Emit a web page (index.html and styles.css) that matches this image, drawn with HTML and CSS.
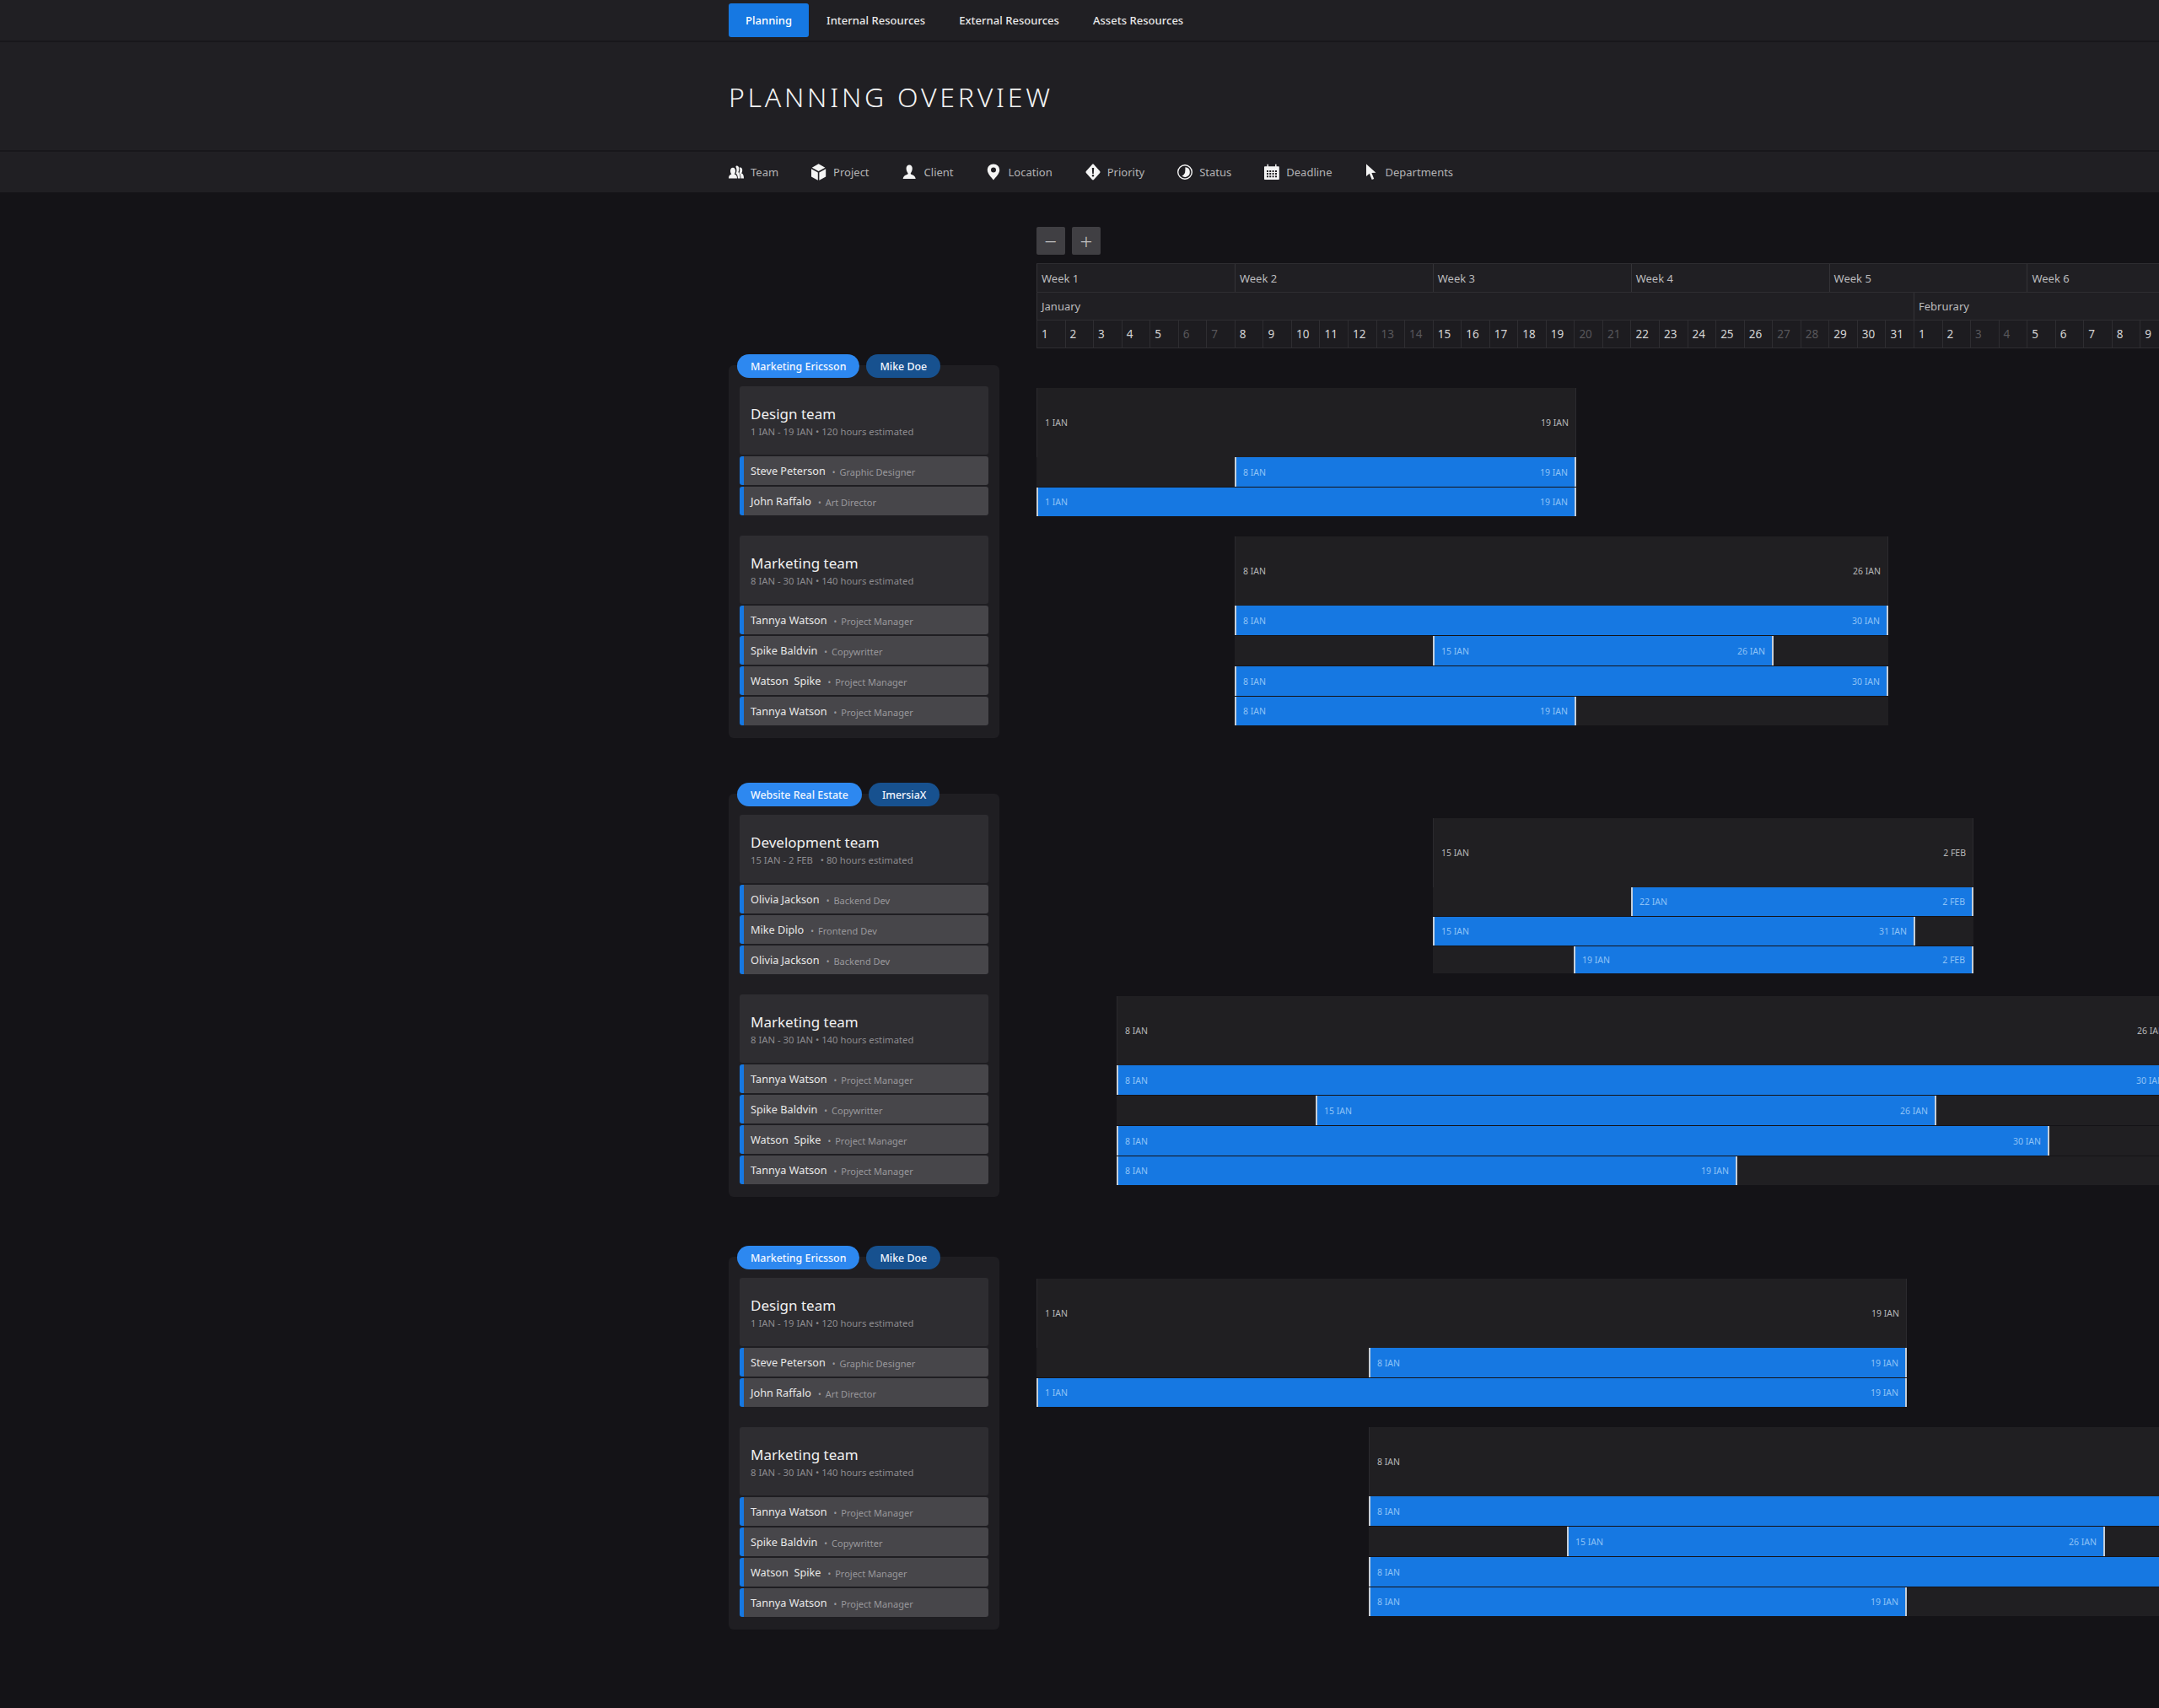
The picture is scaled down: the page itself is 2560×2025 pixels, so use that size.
FILE: index.html
```html
<!DOCTYPE html>
<html lang="en">
<head>
  <meta charset="UTF-8">
  <meta name="viewport" content="width=device-width, initial-scale=1.0">
  <title>Planning Overview</title>
  <link rel="stylesheet" href="styles.css">
</head>
<body>
  <!-- Top Navigation -->
  <nav class="topnav">
    <a class="active" href="#">Planning</a>
    <a href="#">Internal Resources</a>
    <a href="#">External Resources</a>
    <a href="#">Assets Resources</a>
  </nav>

  <header class="page-title">
    <h1>PLANNING OVERVIEW</h1>
  </header>

  <!-- Filters -->
  <div class="filters">
    <div class="filter">
      <svg class="icon" viewBox="0 0 18 20"><path d="M0 17.500c0-3.200 1.500-4.300 3.400-4.900-.9-1.100-1.400-2.500-1.400-4.100C2 6.200 3.200 4.800 5 4.800s3 1.400 3 3.700c0 1.600-.5 3-1.300 4.100 2 .6 3.300 1.700 3.300 4.900z"/><path d="M9.500 2.500c1.800 0 2.800 1.700 2.800 3.800 0 1.600-.4 2.900-1 4 1.400.6 2.400 2.200 2.400 7.200h-2.800c0-3-.8-4.900-2.400-5.800.6-1.200 1-2.500 1-3.800 0-1.600-.4-3-1.100-4.200.2-.8.600-1.200 1.100-1.200z"/><path d="M13.800 4.500c1.500 0 2.400 1.400 2.400 3.200 0 1.500-.4 2.700-1 3.700 1.600.6 2.800 1.800 2.800 6.100h-3.500c0-3-.7-5.300-2-6.500.5-1 .8-2.100.8-3.200 0-1.200-.2-2.200-.7-3 .3-.2.700-.3 1.200-.3z"/></svg>
      <span>Team</span>
    </div>
    <div class="filter">
      <svg class="icon" viewBox="0 0 18 20"><path d="M8.600.3l7.800 4.400-7.800 4.400-7.800-4.400z"/><path d="M0 6.300l7.800 4.300v9.200L0 15.400z"/><path d="M17.200 6.300l-7.800 4.300v9.200l7.800-4.400z"/></svg>
      <span>Project</span>
    </div>
    <div class="filter">
      <svg class="icon" viewBox="0 0 18 20"><path d="M8.200 1.500c2.200 0 3.600 1.800 3.600 4.200 0 2.200-.9 4.200-1.800 5.300-.4.600-.2 1.400.5 1.700 2 .8 4.700 1.500 5.200 5.300H.7c.5-3.800 3.200-4.500 5.200-5.300.7-.3.9-1.100.5-1.700C5.500 9.900 4.600 7.900 4.600 5.700c0-2.400 1.400-4.200 3.600-4.200z"/></svg>
      <span>Client</span>
    </div>
    <div class="filter">
      <svg class="icon" viewBox="0 0 18 20"><path fill-rule="evenodd" d="M8 .5C3.800.5.800 3.600.8 7.600c0 4.500 4.700 8.800 7.200 11.900 2.500-3.100 7.200-7.400 7.200-11.900C15.200 3.600 12.200.5 8 .5zm0 4a3 3 0 1 1 0 6 3 3 0 0 1 0-6z"/></svg>
      <span>Location</span>
    </div>
    <div class="filter">
      <svg class="icon" viewBox="0 0 18 20"><path fill-rule="evenodd" d="M8 1L.8 9c-.5.600-.5 1.300 0 1.900L8 19c.6.600 1.400.6 2 0l7.200-8.100c.5-.6.5-1.300 0-1.900L10 1c-.6-.6-1.400-.6-2 0zM7.800 5h2.400l-.4 7H8.200zM9 13a1.300 1.300 0 1 1 0 2.600A1.300 1.300 0 0 1 9 13z"/></svg>
      <span>Priority</span>
    </div>
    <div class="filter">
      <svg class="icon" viewBox="0 0 18 20"><path fill-rule="evenodd" d="M9 1a9 9 0 1 0 0 18A9 9 0 0 0 9 1zm0 1.400a7.600 7.600 0 1 1 0 15.200A7.600 7.600 0 0 1 9 2.400z"/><path d="M9.400 4.200a5.900 5.900 0 0 1 .5 11.700 5.900 5.900 0 0 1-4.600-1.300c1.800-.9 3.300-2.300 3.800-4.200.4-2 .3-4.200.3-6.200z"/></svg>
      <span>Status</span>
    </div>
    <div class="filter">
      <svg class="icon" viewBox="0 0 18 20"><path fill-rule="evenodd" d="M3.500.8h1.400v2.400h8.200V.8h1.400v2.400h2.300c.6 0 1 .4 1 1V18c0 .6-.4 1-1 1H1c-.6 0-1-.4-1-1V4.200c0-.6.4-1 1-1h2.500zM3 8v2h2V8zm3.200 0v2h2V8zm3.400 0v2h2V8zM13 8v2h2V8zM3 11.100v2h2v-2zm3.200 0v2h2v-2zm3.400 0v2h2v-2zm3.400 0v2h2v-2zM3 14.200v2h2v-2zm3.200 0v2h2v-2zm3.400 0v2h2v-2zm3.400 0v2h2v-2z"/></svg>
      <span>Deadline</span>
    </div>
    <div class="filter">
      <svg class="icon icon-cursor" viewBox="0 0 18 20"><path d="M2 .5V15l3.800-3.300 2.900 7.300 2.500-1-2.800-7 5-.2z"/></svg>
      <span>Departments</span>
    </div>
  </div>

  <main class="planning">
    <!-- Team Sidebar -->
    <aside class="sidebar">
      <section class="project">
        <div class="tags">
          <span class="tag">Marketing Ericsson</span>
          <span class="tag tag-dark">Mike Doe</span>
        </div>
        <div class="panel">
          <div class="team">
            <div class="team-head">
              <h2>Design team</h2>
              <p>1 IAN - 19 IAN &bull; 120 hours estimated</p>
            </div>
            <div class="member"><span class="name">Steve Peterson</span><span class="role">Graphic Designer</span></div>
            <div class="member"><span class="name">John Raffalo</span><span class="role">Art Director</span></div>
          </div>
          <div class="team">
            <div class="team-head">
              <h2>Marketing team</h2>
              <p>8 IAN - 30 IAN &bull; 140 hours estimated</p>
            </div>
            <div class="member"><span class="name">Tannya Watson</span><span class="role">Project Manager</span></div>
            <div class="member"><span class="name">Spike Baldvin</span><span class="role">Copywritter</span></div>
            <div class="member"><span class="name">Watson&nbsp; Spike</span><span class="role">Project Manager</span></div>
            <div class="member"><span class="name">Tannya Watson</span><span class="role">Project Manager</span></div>
          </div>
        </div>
      </section>

      <section class="project">
        <div class="tags">
          <span class="tag">Website Real Estate</span>
          <span class="tag tag-dark">ImersiaX</span>
        </div>
        <div class="panel">
          <div class="team">
            <div class="team-head">
              <h2>Development team</h2>
              <p>15 IAN - 2 FEB &nbsp;&nbsp;&bull; 80 hours estimated</p>
            </div>
            <div class="member"><span class="name">Olivia Jackson</span><span class="role">Backend Dev</span></div>
            <div class="member"><span class="name">Mike Diplo</span><span class="role">Frontend Dev</span></div>
            <div class="member"><span class="name">Olivia Jackson</span><span class="role">Backend Dev</span></div>
          </div>
          <div class="team">
            <div class="team-head">
              <h2>Marketing team</h2>
              <p>8 IAN - 30 IAN &bull; 140 hours estimated</p>
            </div>
            <div class="member"><span class="name">Tannya Watson</span><span class="role">Project Manager</span></div>
            <div class="member"><span class="name">Spike Baldvin</span><span class="role">Copywritter</span></div>
            <div class="member"><span class="name">Watson&nbsp; Spike</span><span class="role">Project Manager</span></div>
            <div class="member"><span class="name">Tannya Watson</span><span class="role">Project Manager</span></div>
          </div>
        </div>
      </section>

      <section class="project project-last">
        <div class="tags">
          <span class="tag">Marketing Ericsson</span>
          <span class="tag tag-dark">Mike Doe</span>
        </div>
        <div class="panel">
          <div class="team">
            <div class="team-head">
              <h2>Design team</h2>
              <p>1 IAN - 19 IAN &bull; 120 hours estimated</p>
            </div>
            <div class="member"><span class="name">Steve Peterson</span><span class="role">Graphic Designer</span></div>
            <div class="member"><span class="name">John Raffalo</span><span class="role">Art Director</span></div>
          </div>
          <div class="team">
            <div class="team-head">
              <h2>Marketing team</h2>
              <p>8 IAN - 30 IAN &bull; 140 hours estimated</p>
            </div>
            <div class="member"><span class="name">Tannya Watson</span><span class="role">Project Manager</span></div>
            <div class="member"><span class="name">Spike Baldvin</span><span class="role">Copywritter</span></div>
            <div class="member"><span class="name">Watson&nbsp; Spike</span><span class="role">Project Manager</span></div>
            <div class="member"><span class="name">Tannya Watson</span><span class="role">Project Manager</span></div>
          </div>
        </div>
      </section>
    </aside>

    <!-- Timeline -->
    <div class="timeline">
      <div class="zoom-controls">
        <button>&minus;</button>
        <button>+</button>
      </div>

      <div class="calendar">
        <div class="weeks">
          <div>Week 1</div><div>Week 2</div><div>Week 3</div><div>Week 4</div><div>Week 5</div><div>Week 6</div>
        </div>
        <div class="months">
          <div class="month-jan">January</div>
          <div class="month-feb">Februrary</div>
        </div>
        <div class="days">
          <div>1</div><div>2</div><div>3</div><div>4</div><div>5</div><div class="off">6</div><div class="off">7</div>
          <div>8</div><div>9</div><div>10</div><div>11</div><div>12</div><div class="off">13</div><div class="off">14</div>
          <div>15</div><div>16</div><div>17</div><div>18</div><div>19</div><div class="off">20</div><div class="off">21</div>
          <div>22</div><div>23</div><div>24</div><div>25</div><div>26</div><div class="off">27</div><div class="off">28</div>
          <div>29</div><div>30</div><div>31</div><div>1</div><div>2</div><div class="off">3</div><div class="off">4</div>
          <div>5</div><div>6</div><div>7</div><div>8</div><div>9</div>
        </div>
      </div>

      <div class="gantt gantt-first" style="margin-left:0;width:640px">
        <div class="gantt-head"><span>1 IAN</span><span>19 IAN</span></div>
        <div class="gantt-row"><div class="bar" style="margin-left:235px;width:405px"><span>8 IAN</span><span>19 IAN</span></div></div>
        <div class="gantt-row"><div class="bar" style="width:640px"><span>1 IAN</span><span>19 IAN</span></div></div>
      </div>
      <div class="gantt" style="margin-left:235px;width:775px">
        <div class="gantt-head"><span>8 IAN</span><span>26 IAN</span></div>
        <div class="gantt-row"><div class="bar" style="width:775px"><span>8 IAN</span><span>30 IAN</span></div></div>
        <div class="gantt-row"><div class="bar" style="margin-left:235px;width:404px"><span>15 IAN</span><span>26 IAN</span></div></div>
        <div class="gantt-row"><div class="bar" style="width:775px"><span>8 IAN</span><span>30 IAN</span></div></div>
        <div class="gantt-row"><div class="bar" style="width:405px"><span>8 IAN</span><span>19 IAN</span></div></div>
      </div>

      <div class="gantt gantt-group gantt-tight" style="margin-left:470px;width:641px">
        <div class="gantt-head"><span>15 IAN</span><span>2 FEB</span></div>
        <div class="gantt-row"><div class="bar" style="margin-left:235px;width:406px"><span>22 IAN</span><span>2 FEB</span></div></div>
        <div class="gantt-row"><div class="bar" style="width:572px"><span>15 IAN</span><span>31 IAN</span></div></div>
        <div class="gantt-row"><div class="bar" style="margin-left:167px;width:474px"><span>19 IAN</span><span>2 FEB</span></div></div>
      </div>
      <div class="gantt" style="margin-left:95px;width:1252px">
        <div class="gantt-head"><span>8 IAN</span><span>26 IAN</span></div>
        <div class="gantt-row"><div class="bar" style="width:1252px"><span>8 IAN</span><span>30 IAN</span></div></div>
        <div class="gantt-row"><div class="bar" style="margin-left:236px;width:736px"><span>15 IAN</span><span>26 IAN</span></div></div>
        <div class="gantt-row"><div class="bar" style="width:1106px"><span>8 IAN</span><span>30 IAN</span></div></div>
        <div class="gantt-row"><div class="bar" style="width:736px"><span>8 IAN</span><span>19 IAN</span></div></div>
      </div>

      <div class="gantt gantt-group gantt-group-last" style="margin-left:0;width:1032px">
        <div class="gantt-head"><span>1 IAN</span><span>19 IAN</span></div>
        <div class="gantt-row"><div class="bar" style="margin-left:394px;width:638px"><span>8 IAN</span><span>19 IAN</span></div></div>
        <div class="gantt-row"><div class="bar" style="width:1032px"><span>1 IAN</span><span>19 IAN</span></div></div>
      </div>
      <div class="gantt" style="margin-left:394px;width:1253px">
        <div class="gantt-head"><span>8 IAN</span><span>26 IAN</span></div>
        <div class="gantt-row"><div class="bar" style="width:1253px"><span>8 IAN</span><span>30 IAN</span></div></div>
        <div class="gantt-row"><div class="bar" style="margin-left:235px;width:638px"><span>15 IAN</span><span>26 IAN</span></div></div>
        <div class="gantt-row"><div class="bar" style="width:1253px"><span>8 IAN</span><span>30 IAN</span></div></div>
        <div class="gantt-row"><div class="bar" style="width:638px"><span>8 IAN</span><span>19 IAN</span></div></div>
      </div>
    </div>
  </main>
</body>
</html>
```

FILE: styles.css
```css
/* General Reset */
* {
  box-sizing: border-box;
  margin: 0;
  padding: 0;
}
html, body {
  height: 100vh;
  overflow: hidden;
}
body {
  font-family: "Noto Sans", "Open Sans", sans-serif;
  background-color: #141317;
  color: #e6e6e6;
}

/* Top Navigation */
.topnav {
  display: flex;
  align-items: center;
  height: 50px;
  padding-left: 864px;
  background-color: #201f23;
  border-bottom: 2px solid #18171b;
}
.topnav a {
  display: flex;
  align-items: center;
  height: 40px;
  padding: 0 20px;
  color: #e8e8e8;
  font-size: 13px;
  font-weight: 500;
  letter-spacing: .03px;
  text-decoration: none;
  border-radius: 3px;
}
.topnav a.active {
  width: 95px;
  margin-right: 1px;
  background-color: #1678e2;
  color: #fff;
}

/* Page Title */
.page-title {
  display: flex;
  align-items: center;
  height: 130px;
  padding-left: 864px;
  padding-top: 1px;
  background-color: #201f23;
  border-bottom: 2px solid #18171b;
}
.page-title h1 {
  font-size: 32px;
  font-weight: 300;
  letter-spacing: 3.75px;
  color: #f2f2f2;
}

/* Filters */
.filters {
  display: flex;
  align-items: center;
  gap: 39px;
  height: 48px;
  padding-left: 864px;
  background-color: #201f23;
}
.filter {
  display: flex;
  align-items: center;
  gap: 8px;
  font-size: 13px;
  color: #b4b4b6;
}
.icon {
  width: 18px;
  height: 20px;
  fill: #f4f4f4;
}
.icon-cursor {
  margin-right: -2px;
}

/* Main Layout */
.planning {
  display: flex;
  gap: 44px;
  padding: 41px 0 0 864px;
}
.sidebar {
  flex: 0 0 321px;
  margin-top: 151px;
}
.timeline {
  flex: 0 0 1400px;
}

/* Project Panels */
.project + .project {
  margin-top: 53px;
}
.project + .project-last {
  margin-top: 58px;
}
.tags {
  position: relative;
  display: flex;
  gap: 8px;
  margin: 0 0 -15px 10px;
}
.tag {
  display: flex;
  align-items: center;
  height: 28px;
  padding: 0 16px;
  border-radius: 14px;
  background-color: #2d88f0;
  color: #f2f7ff;
  font-size: 12.4px;
  font-weight: 500;
}
.tag-dark {
  background-color: #17518f;
}
.panel {
  padding: 25px 13px 15px;
  background-color: #1f1e22;
  border-radius: 6px;
}
.team + .team {
  margin-top: 24px;
}
.team-head {
  display: flex;
  flex-direction: column;
  justify-content: center;
  height: 81px;
  padding-left: 13px;
  padding-top: 1px;
  background-color: #2e2d31;
  border-radius: 3px;
}
.team-head h2 {
  font-size: 17px;
  font-weight: 400;
  line-height: 24px;
  margin-bottom: 1px;
  color: #f0f0f0;
}
.team-head p {
  font-size: 11.3px;
  line-height: 16px;
  color: #8c8b8f;
}
.member {
  display: flex;
  align-items: center;
  height: 34px;
  margin-top: 2px;
  padding-left: 8px;
  background-color: #47464a;
  border-left: 5px solid #1678e2;
  border-radius: 3px;
}
.name {
  font-size: 12.7px;
  font-weight: 400;
  color: #e8e8e8;
}
.role {
  font-size: 11px;
  color: #99989c;
  margin-left: 8px;
  padding-top: 2px;
}
.role::before {
  content: "\2022";
  margin-right: 5px;
  font-size: 10px;
}

/* Zoom Controls */
.zoom-controls {
  display: flex;
  gap: 8px;
  margin-bottom: 10px;
}
.zoom-controls button {
  display: flex;
  align-items: center;
  justify-content: center;
  width: 34px;
  height: 33px;
  border: none;
  border-radius: 2px;
  background-color: #403f43;
  color: #bdbdbf;
  font-family: "Noto Sans", sans-serif;
  font-size: 26px;
  font-weight: 300;
  line-height: 1;
}

/* Calendar Header */
.calendar {
  width: 1400px;
  font-size: 13px;
  color: #bcbcbe;
}
.weeks,
.months {
  display: flex;
  height: 34px;
  background-color: #201f23;
  border-top: 1px solid #2e2d31;
}
.months {
  height: 33px;
}
.weeks div {
  flex: 0 0 234.9px;
  display: flex;
  align-items: center;
  padding-left: 5px;
  border-left: 1px solid #343337;
}
.month-jan,
.month-feb {
  display: flex;
  align-items: center;
  padding-left: 5px;
  border-left: 1px solid #343337;
}
.month-jan {
  flex: 0 0 1040px;
}
.month-feb {
  flex: 1;
}
.days {
  display: grid;
  grid-template-columns: repeat(40, 33.55px);
  height: 34px;
  border-top: 1px solid #2e2d31;
  border-bottom: 1px solid #2e2d31;
  background-color: #1d1c20;
}
.days div {
  display: flex;
  align-items: center;
  padding-left: 5px;
  font-size: 13.5px;
  color: #d4d4d4;
  border-left: 1px solid #2e2d31;
}
.days div.off {
  color: #58575b;
}

/* Gantt Blocks */
.gantt {
  margin-top: 24px;
}
.gantt-first {
  margin-top: 47px;
}
.gantt-group {
  margin-top: 110px;
}
.gantt-group-last {
  margin-top: 111px;
}
.gantt-head {
  display: flex;
  justify-content: space-between;
  align-items: center;
  height: 82px;
  padding: 0 8px 0 9px;
  background-color: #201f22;
  border-left: 1px solid #2b2a2e;
  border-right: 1px solid #2b2a2e;
  font-size: 10.5px;
  color: #b6b6b8;
}
.gantt-row {
  height: 35px;
  margin-bottom: 1px;
  background-color: #201f22;
}
.gantt-row:last-child {
  height: 34px;
  margin-bottom: 0;
}
.gantt-tight .gantt-row {
  height: 34px;
}
.gantt-tight .gantt-row:last-child {
  height: 32px;
}
.gantt-tight + .gantt {
  margin-top: 27px;
}
.bar {
  display: flex;
  justify-content: space-between;
  align-items: center;
  height: 100%;
  padding: 0 8px;
  background-color: #1678e2;
  border-left: 2px solid #c5ced8;
  border-right: 2px solid #c5ced8;
  font-size: 10.5px;
  color: #8ec2f6;
}
```
